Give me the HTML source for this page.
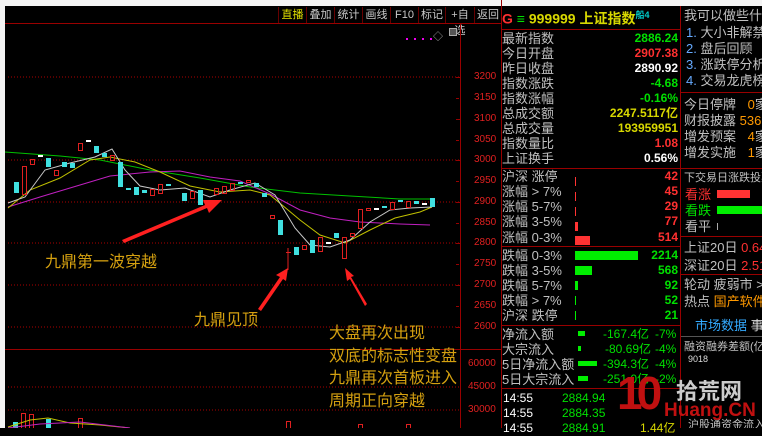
<!DOCTYPE html>
<html><head><meta charset="utf-8"><style>
*{margin:0;padding:0;box-sizing:border-box}
body{width:762px;height:428px;overflow:hidden;background:#000;position:relative;font-family:"Liberation Sans","Noto Sans CJK SC",sans-serif;color:#c0c0c0}
.a{position:absolute;white-space:nowrap}
.tb{position:absolute;top:7px;height:16px;font-size:11px;color:#c8c8c8;line-height:16px;text-align:center;border-left:1px solid #600}
.l{position:absolute;left:502px;font-size:13px;color:#c0c0c0;line-height:15px;white-space:nowrap}
.v{position:absolute;right:84px;font-size:12px;font-weight:bold;line-height:15px;text-align:right;white-space:nowrap}
.r{position:absolute;font-size:13px;line-height:15px;white-space:nowrap}
.ax{position:absolute;left:474px;font-size:10px;color:#e02020}
.g{color:#00e000}.rd{color:#ff3030}.w{color:#fff}.y{color:#d8d800}.o{color:#ff9900}
.ann{position:absolute;color:#d4a010;font-size:16px;white-space:nowrap}
#rc{position:absolute;left:681px;top:6px;width:81px;height:422px;overflow:hidden}
#rc .r{margin-left:-681px;margin-top:-6px}
#rc .a{margin-left:-681px;margin-top:-6px}
</style></head><body>
<div class="a" style="left:0;top:0;width:762px;height:6px;background:#f4f4f4"></div>
<div class="a" style="left:0;top:0;width:5px;height:428px;background:#f4f4f4"></div>
<div class="a" style="left:5px;top:23px;width:496px;height:1px;background:#900"></div>
<div class="tb" style="left:278px;width:28px;color:#e0e000">直播</div>
<div class="tb" style="left:306px;width:28px">叠加</div>
<div class="tb" style="left:334px;width:28px">统计</div>
<div class="tb" style="left:362px;width:28px">画线</div>
<div class="tb" style="left:390px;width:28px">F10</div>
<div class="tb" style="left:418px;width:27px">标记</div>
<div class="tb" style="left:445px;width:29px">+自选</div>
<div class="tb" style="left:474px;width:27px">返回</div>
<div class="a" style="left:460px;top:24px;width:1px;height:404px;background:#900"></div>
<div class="a" style="left:5px;top:349px;width:496px;height:1px;background:#900"></div>
<div class="a" style="left:433px;top:28px;color:#aaa;font-size:10px">◇</div>
<div class="a" style="left:449px;top:28px;width:8px;height:8px;border:1px solid #aaa;background:#555"></div>
<svg class="a" style="left:0;top:0" width="501" height="428">
<g stroke="#a00" stroke-dasharray="1,2" stroke-width="1">
<line x1="8" y1="77" x2="460" y2="77"/><line x1="8" y1="160" x2="460" y2="160"/><line x1="8" y1="202" x2="460" y2="202"/><line x1="8" y1="243" x2="460" y2="243"/><line x1="8" y1="285" x2="460" y2="285"/><line x1="8" y1="327" x2="460" y2="327"/><line x1="8" y1="387" x2="460" y2="387"/><line x1="8" y1="410" x2="460" y2="410"/>
</g>
<g fill="#e0e" ><rect x="406" y="38" width="2" height="2"/><rect x="414" y="38" width="2" height="2"/><rect x="422" y="38" width="2" height="2"/><rect x="430" y="38" width="2" height="2"/></g>
<polyline fill="none" stroke="#00c000" stroke-width="1" points="5,152 60,156 100,160 150,170 200,178 250,187 300,193 350,196 400,199 435,199"/>
<polyline fill="none" stroke="#c020c0" stroke-width="1" points="8,207 40,197 80,185 110,176 150,172 180,171 210,177 240,181 270,194 300,210 330,218 360,222 400,224 430,225"/>
<polyline fill="none" stroke="#c0c000" stroke-width="1" points="8,208 30,190 60,178 90,160 110,157 135,162 160,172 190,186 220,192 250,190 270,195 300,220 320,235 345,243 370,230 395,218 420,212 432,207"/>
<polyline fill="none" stroke="#c8c8c8" stroke-width="1" points="8,203 25,197 45,170 70,163 95,157 112,149 125,170 140,186 160,190 185,188 210,197 230,190 255,183 275,195 295,228 310,245 330,247 350,240 370,222 390,210 410,208 432,207"/>
<g stroke-width="1">
<rect x="14" y="182" width="5" height="11" fill="#40e0e0"/>
<rect x="22.5" y="166.5" width="4" height="28" fill="none" stroke="#e02020"/>
<rect x="30.5" y="159.5" width="4" height="5" fill="none" stroke="#e02020"/>
<rect x="38" y="155" width="5" height="2" fill="#fff"/>
<rect x="46" y="158" width="5" height="9" fill="#40e0e0"/>
<rect x="54.5" y="170.5" width="4" height="5" fill="none" stroke="#e02020"/>
<rect x="62" y="162" width="5" height="5" fill="#40e0e0"/>
<rect x="70" y="163" width="5" height="5" fill="#40e0e0"/>
<rect x="78.5" y="143.5" width="4" height="7" fill="none" stroke="#e02020"/>
<rect x="86" y="140" width="5" height="2" fill="#fff"/>
<rect x="94" y="146" width="5" height="7" fill="#40e0e0"/>
<rect x="102" y="153" width="5" height="4" fill="#40e0e0"/>
<rect x="110.5" y="155.5" width="4" height="5" fill="none" stroke="#e02020"/>
<rect x="118" y="162" width="5" height="25" fill="#40e0e0"/>
<rect x="126" y="188" width="5" height="2" fill="#40e0e0"/>
<rect x="134" y="187" width="5" height="8" fill="#40e0e0"/>
<rect x="142" y="190" width="5" height="3" fill="#40e0e0"/>
<rect x="150.5" y="189.5" width="4" height="6" fill="none" stroke="#e02020"/>
<rect x="158.5" y="184.5" width="4" height="9" fill="none" stroke="#e02020"/>
<rect x="166" y="184" width="5" height="2" fill="#40e0e0"/>
<rect x="182" y="193" width="5" height="8" fill="#40e0e0"/>
<rect x="190.5" y="191.5" width="4" height="7" fill="none" stroke="#e02020"/>
<rect x="198" y="190" width="5" height="15" fill="#40e0e0"/>
<rect x="214.5" y="188.5" width="4" height="6" fill="none" stroke="#e02020"/>
<rect x="222.5" y="186.5" width="4" height="7" fill="none" stroke="#e02020"/>
<rect x="230.5" y="183.5" width="4" height="7" fill="none" stroke="#e02020"/>
<rect x="238" y="182" width="5" height="2" fill="#40e0e0"/>
<rect x="246.5" y="180.5" width="4" height="2" fill="none" stroke="#e02020"/>
<rect x="254" y="183" width="5" height="4" fill="#40e0e0"/>
<rect x="262" y="193" width="5" height="4" fill="#40e0e0"/>
<rect x="270.5" y="215.5" width="4" height="3" fill="none" stroke="#e02020"/>
<rect x="278" y="220" width="5" height="15" fill="#40e0e0"/>
<line x1="288" y1="248" x2="288" y2="270" stroke="#e02020"/><rect x="286" y="252" width="5" height="1" fill="#e02020"/>
<rect x="294" y="247" width="5" height="8" fill="#40e0e0"/>
<rect x="302.5" y="245.5" width="4" height="4" fill="none" stroke="#e02020"/>
<rect x="310" y="240" width="5" height="13" fill="#40e0e0"/>
<rect x="318.5" y="237.5" width="4" height="14" fill="none" stroke="#e02020"/>
<rect x="326" y="242" width="5" height="2" fill="#fff"/>
<rect x="334" y="233" width="5" height="5" fill="#40e0e0"/>
<rect x="342.5" y="237.5" width="4" height="21" fill="none" stroke="#e02020"/>
<rect x="350.5" y="233.5" width="4" height="3" fill="none" stroke="#e02020"/>
<rect x="358.5" y="209.5" width="4" height="19" fill="none" stroke="#e02020"/>
<rect x="366.5" y="208.5" width="4" height="2" fill="none" stroke="#e02020"/>
<rect x="374" y="208" width="5" height="2" fill="#fff"/>
<rect x="382" y="206" width="5" height="2" fill="#40e0e0"/>
<rect x="390.5" y="202.5" width="4" height="7" fill="none" stroke="#e02020"/>
<rect x="398" y="200" width="5" height="2" fill="#40e0e0"/>
<rect x="406.5" y="201.5" width="4" height="6" fill="none" stroke="#e02020"/>
<rect x="414" y="201" width="5" height="3" fill="#40e0e0"/>
<rect x="422" y="203" width="5" height="2" fill="#fff"/>
<rect x="430" y="198" width="5" height="9" fill="#40e0e0"/>
</g>
<g fill="none" stroke-width="1">
<rect x="21.5" y="413.5" width="4" height="15" stroke="#e02020"/><rect x="29.5" y="414.5" width="4" height="14" stroke="#e02020"/>
<rect x="13" y="422" width="5" height="6" fill="#40e0e0" stroke="none"/><rect x="46" y="419" width="5" height="9" fill="#40e0e0" stroke="none"/>
<rect x="78.5" y="418.5" width="4" height="10" stroke="#e02020"/><rect x="286.5" y="421.5" width="4" height="7" stroke="#e02020"/>
<rect x="358.5" y="424.5" width="4" height="4" stroke="#e02020"/><rect x="406.5" y="424.5" width="4" height="4" stroke="#e02020"/>
<polyline stroke="#c0c000" points="8,427 30,420 48,418 70,423 100,425 130,428"/>
<polyline stroke="#c020c0" points="8,428 40,424 80,422 130,428"/>
</g>
<g fill="#ff2020">
<polygon points="122,240 205,205 203,200 222,200 209,213 207,208 124,243"/>
<polygon points="258,309 280,277 276,275 288,268 286,281 283,279 261,311"/>
<polygon points="365,306 350,279 347,281 345,268 354,276 351,277 367,304"/>
</g>
<g fill="#900"><rect x="456" y="77" width="5" height="1"/><rect x="456" y="98" width="3" height="1"/><rect x="456" y="119" width="5" height="1"/><rect x="456" y="140" width="3" height="1"/><rect x="456" y="160" width="5" height="1"/><rect x="456" y="181" width="3" height="1"/><rect x="456" y="202" width="5" height="1"/><rect x="456" y="223" width="3" height="1"/><rect x="456" y="243" width="5" height="1"/><rect x="456" y="264" width="3" height="1"/><rect x="456" y="285" width="5" height="1"/><rect x="456" y="306" width="3" height="1"/><rect x="456" y="327" width="5" height="1"/></g>
</svg>
<div class="ax" style="top:71px">3200</div><div class="ax" style="top:92px">3150</div><div class="ax" style="top:113px">3100</div><div class="ax" style="top:134px">3050</div><div class="ax" style="top:154px">3000</div><div class="ax" style="top:175px">2950</div><div class="ax" style="top:196px">2900</div><div class="ax" style="top:217px">2850</div><div class="ax" style="top:237px">2800</div><div class="ax" style="top:258px">2750</div><div class="ax" style="top:279px">2700</div><div class="ax" style="top:300px">2650</div><div class="ax" style="top:321px">2600</div>
<div class="ax" style="left:468px;top:358px">60000</div><div class="ax" style="left:468px;top:381px">45000</div><div class="ax" style="left:468px;top:404px">30000</div>
<div class="ann" style="left:45px;top:248px">九鼎第一波穿越</div>
<div class="ann" style="left:194px;top:306px">九鼎见顶</div>
<div class="ann" style="left:329px;top:323px;line-height:22.5px">大盘再次出现<br>双底的标志性变盘<br>九鼎再次首板进入<br>周期正向穿越</div>

<!-- middle panel -->
<div class="a" style="left:501px;top:0;width:1px;height:428px;background:#900"></div>
<div class="a" style="left:680px;top:6px;width:1px;height:422px;background:#900"></div>
<div class="a" style="left:502px;top:8px;font-size:14px;font-weight:bold"><span class="rd">G</span> <span class="g" style="font-weight:normal">≡</span> <span class="y">999999 上证指数</span><sup style="color:#0cc;font-size:9px">船4</sup></div>
<div class="a" style="left:502px;top:29px;width:178px;height:1px;background:#900"></div>
<div class="l" style="top:31px">最新指数</div><div class="v g" style="top:31px">2886.24</div>
<div class="l" style="top:46px">今日开盘</div><div class="v rd" style="top:46px">2907.38</div>
<div class="l" style="top:61px">昨日收盘</div><div class="v w" style="top:61px">2890.92</div>
<div class="l" style="top:76px">指数涨跌</div><div class="v g" style="top:76px">-4.68</div>
<div class="l" style="top:91px">指数涨幅</div><div class="v g" style="top:91px">-0.16%</div>
<div class="l" style="top:106px">总成交额</div><div class="v y" style="top:106px">2247.5117亿</div>
<div class="l" style="top:121px">总成交量</div><div class="v y" style="top:121px">193959951</div>
<div class="l" style="top:136px">指数量比</div><div class="v rd" style="top:136px">1.08</div>
<div class="l" style="top:151px">上证换手</div><div class="v w" style="top:151px">0.56%</div>
<div class="a" style="left:502px;top:168px;width:178px;height:1px;background:#900"></div>
<div class="l" style="top:169px">沪深 涨停</div><div class="v rd" style="top:169px">42</div>
<div class="l" style="top:184px">涨幅 &gt; 7%</div><div class="v rd" style="top:184px">45</div>
<div class="l" style="top:199px">涨幅 5-7%</div><div class="v rd" style="top:199px">29</div>
<div class="l" style="top:214px">涨幅 3-5%</div><div class="v rd" style="top:214px">77</div>
<div class="l" style="top:230px">涨幅 0-3%</div><div class="v rd" style="top:230px">514</div>
<div class="a" style="left:502px;top:246px;width:178px;height:1px;background:#900"></div>
<div class="l" style="top:248px">跌幅 0-3%</div><div class="v g" style="top:248px">2214</div>
<div class="l" style="top:263px">跌幅 3-5%</div><div class="v g" style="top:263px">568</div>
<div class="l" style="top:278px">跌幅 5-7%</div><div class="v g" style="top:278px">92</div>
<div class="l" style="top:293px">跌幅 &gt; 7%</div><div class="v g" style="top:293px">52</div>
<div class="l" style="top:308px">沪深 跌停</div><div class="v g" style="top:308px">21</div>
<div class="a" style="left:575px;top:177px;width:1px;height:9px;background:#f33"></div>
<div class="a" style="left:575px;top:192px;width:1px;height:9px;background:#f33"></div>
<div class="a" style="left:575px;top:207px;width:1px;height:9px;background:#f33"></div>
<div class="a" style="left:575px;top:222px;width:3px;height:9px;background:#f33"></div>
<div class="a" style="left:575px;top:236px;width:15px;height:9px;background:#f33"></div>
<div class="a" style="left:575px;top:251px;width:63px;height:9px;background:#0e0"></div>
<div class="a" style="left:575px;top:266px;width:17px;height:9px;background:#0e0"></div>
<div class="a" style="left:575px;top:281px;width:3px;height:9px;background:#0e0"></div>
<div class="a" style="left:575px;top:296px;width:1px;height:9px;background:#0e0"></div>
<div class="a" style="left:575px;top:311px;width:1px;height:9px;background:#0e0"></div>
<div class="a" style="left:502px;top:325px;width:178px;height:1px;background:#900"></div>
<div class="l" style="top:327px">净流入额</div><div class="l" style="top:342px">大宗流入</div><div class="l" style="top:357px">5日净流入额</div><div class="l" style="top:372px">5日大宗流入</div>
<div class="a" style="left:578px;top:331px;width:7px;height:5px;background:#0e0"></div>
<div class="a" style="left:578px;top:346px;width:3px;height:5px;background:#0e0"></div>
<div class="a" style="left:578px;top:361px;width:19px;height:5px;background:#0e0"></div>
<div class="a" style="left:578px;top:376px;width:10px;height:5px;background:#0e0"></div>
<div class="r g" style="left:603px;top:327px;font-size:12px">-167.4亿</div><div class="r g" style="left:655px;top:327px;font-size:12px">-7%</div>
<div class="r g" style="left:605px;top:342px;font-size:12px">-80.69亿</div><div class="r g" style="left:655px;top:342px;font-size:12px">-4%</div>
<div class="r g" style="left:603px;top:357px;font-size:12px">-394.3亿</div><div class="r g" style="left:655px;top:357px;font-size:12px">-4%</div>
<div class="r g" style="left:603px;top:372px;font-size:12px">-251.0亿</div><div class="r g" style="left:655px;top:372px;font-size:12px">-2%</div>
<div class="a" style="left:502px;top:388px;width:178px;height:1px;background:#900"></div>
<div class="r w" style="left:503px;top:391px;font-size:12px">14:55</div><div class="r g" style="left:562px;top:391px;font-size:12px">2884.94</div>
<div class="r w" style="left:503px;top:406px;font-size:12px">14:55</div><div class="r g" style="left:562px;top:406px;font-size:12px">2884.35</div>
<div class="r w" style="left:503px;top:421px;font-size:12px">14:55</div><div class="r g" style="left:562px;top:421px;font-size:12px">2884.91</div>
<div class="r y" style="left:640px;top:421px;font-size:12px">1.44亿</div>

<div id="rc">
<div class="r" style="left:684px;top:8px;font-size:13px">我可以做些什么</div>
<div class="r" style="left:686px;top:25px"><span style="color:#6af">1.</span> 大小非解禁</div>
<div class="r" style="left:686px;top:41px"><span style="color:#6af">2.</span> 盘后回顾</div>
<div class="r" style="left:686px;top:57px"><span style="color:#6af">3.</span> 涨跌停分析 <span class="rd">7</span></div>
<div class="r" style="left:686px;top:73px"><span style="color:#6af">4.</span> 交易龙虎榜 <span class="o">6</span></div>
<div class="a" style="left:681px;top:92px;width:81px;height:1px;background:#900"></div>
<div class="r" style="left:684px;top:97px">今日停牌 <span class="o" style="margin-left:8px">0</span>家</div>
<div class="r" style="left:684px;top:113px">财报披露 <span class="o">536</span>家</div>
<div class="r" style="left:684px;top:129px">增发预案 <span class="o" style="margin-left:8px">4</span>家</div>
<div class="r" style="left:684px;top:145px">增发实施 <span class="o" style="margin-left:8px">1</span>家</div>
<div class="a" style="left:681px;top:168px;width:81px;height:1px;background:#900"></div>
<div class="r" style="left:684px;top:171px;font-size:11px">下交易日涨跌投票</div>
<div class="r rd" style="left:685px;top:187px">看涨</div><div class="a" style="left:717px;top:190px;width:33px;height:8px;background:#f33"></div>
<div class="r g" style="left:685px;top:203px">看跌</div><div class="a" style="left:717px;top:206px;width:45px;height:8px;background:#0e0"></div>
<div class="r" style="left:685px;top:219px">看平</div><div class="a" style="left:717px;top:223px;width:1px;height:7px;background:#aaa"></div>
<div class="a" style="left:681px;top:236px;width:81px;height:1px;background:#900"></div>
<div class="r" style="left:684px;top:240px">上证20日 <span class="rd">0.64</span></div>
<div class="r" style="left:684px;top:258px">深证20日 <span class="rd">2.51</span></div>
<div class="a" style="left:681px;top:274px;width:81px;height:1px;background:#900"></div>
<div class="r" style="left:684px;top:277px">轮动 疲弱市 &gt; 中</div>
<div class="r" style="left:684px;top:294px">热点 <span class="o">国产软件</span></div>
<div class="r" style="left:695px;top:318px;color:#3af">市场数据 <span style="color:#ddd">事件</span></div>
<div class="a" style="left:681px;top:336px;width:81px;height:1px;background:#555"></div>
<div class="r" style="left:684px;top:340px;font-size:11px">融资融券差额(亿)</div>
<div class="r" style="left:688px;top:352px;font-size:9px;color:#ddd">9018</div>
<div class="r" style="left:688px;top:418px;font-size:11px">沪股通资金流入(亿)</div>
</div>
<!-- watermark -->
<div class="a" style="left:617px;top:369px;font-size:46px;font-weight:bold;color:#c01010;letter-spacing:-6px;line-height:48px;font-family:'Liberation Sans',sans-serif">10</div>
<div class="a" style="left:676px;top:374px;font-size:22px;color:#ccc;font-weight:bold">拾荒网</div>
<div class="a" style="left:664px;top:400px;font-size:19px;color:#c01010;font-weight:bold">Huang.CN</div>
</body></html>
